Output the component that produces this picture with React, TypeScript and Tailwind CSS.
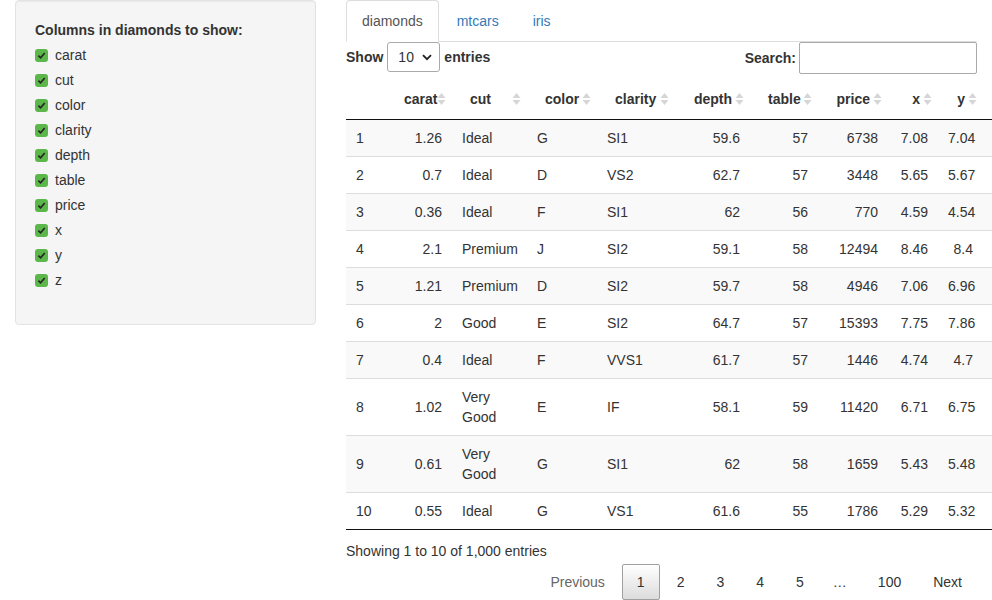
import type { ReactNode } from "react";

type Col = { name: string; width: string; right: boolean; sortable: boolean };

// the z column runs off the right edge of the window, so it is drawn empty
const cols: Col[] = [
  { name: "", width: "w-[40px]", right: false, sortable: false },
  { name: "carat", width: "w-[66px]", right: true, sortable: true },
  { name: "cut", width: "w-[75px]", right: false, sortable: true },
  { name: "color", width: "w-[70px]", right: false, sortable: true },
  { name: "clarity", width: "w-[78px]", right: false, sortable: true },
  { name: "depth", width: "w-[75px]", right: true, sortable: true },
  { name: "table", width: "w-[68px]", right: true, sortable: true },
  { name: "price", width: "w-[70px]", right: true, sortable: true },
  { name: "x", width: "w-[50px]", right: true, sortable: true },
  { name: "y", width: "w-[45px]", right: true, sortable: true },
  { name: "", width: "w-[60px]", right: true, sortable: false },
];

const rows: string[][] = [
  ["1", "1.26", "Ideal", "G", "SI1", "59.6", "57", "6738", "7.08", "7.04", ""],
  ["2", "0.7", "Ideal", "D", "VS2", "62.7", "57", "3448", "5.65", "5.67", ""],
  ["3", "0.36", "Ideal", "F", "SI1", "62", "56", "770", "4.59", "4.54", ""],
  ["4", "2.1", "Premium", "J", "SI2", "59.1", "58", "12494", "8.46", "8.4", ""],
  ["5", "1.21", "Premium", "D", "SI2", "59.7", "58", "4946", "7.06", "6.96", ""],
  ["6", "2", "Good", "E", "SI2", "64.7", "57", "15393", "7.75", "7.86", ""],
  ["7", "0.4", "Ideal", "F", "VVS1", "61.7", "57", "1446", "4.74", "4.7", ""],
  ["8", "1.02", "Very Good", "E", "IF", "58.1", "59", "11420", "6.71", "6.75", ""],
  ["9", "0.61", "Very Good", "G", "SI1", "62", "58", "1659", "5.43", "5.48", ""],
  ["10", "0.55", "Ideal", "G", "VS1", "61.6", "55", "1786", "5.29", "5.32", ""],
];

const checks = ["carat", "cut", "color", "clarity", "depth", "table", "price", "x", "y", "z"];

function SortIcon() {
  return (
    <svg width="9" height="13" viewBox="0 0 9 13" className="absolute right-[6px] top-1/2 -translate-y-1/2">
      <path d="M4.5 0.5L8.5 5.5H0.5Z" fill="#d6d6d6" />
      <path d="M4.5 12.5L8.5 7.5H0.5Z" fill="#d6d6d6" />
    </svg>
  );
}

function CheckItem({ label }: { label: string }) {
  return (
    <label className="flex items-center h-[20px]">
      <span className="w-[13px] h-[13px] rounded-[3px] bg-[#5cb74a] flex items-center justify-center mr-[7px]">
        <svg width="9" height="9" viewBox="0 0 10 10">
          <path d="M1.5 5.2L4 7.6L8.6 2.2" stroke="#262626" strokeWidth="1.9" fill="none" />
        </svg>
      </span>
      <span>{label}</span>
    </label>
  );
}

function PageButton({ children, current, muted }: { children: ReactNode; current?: boolean; muted?: boolean }) {
  return (
    <span
      className={
        current
          ? "ml-[2px] h-[36px] min-w-[21px] px-[14px] py-[7px] border border-[#a0a0a0] rounded-[2px] bg-linear-to-b from-white to-[#dcdcdc] text-[#333]"
          : muted
            ? "ml-[2px] h-[36px] min-w-[21px] px-[14px] py-[7px] border border-transparent text-[#666]"
            : "ml-[2px] h-[36px] min-w-[21px] px-[14px] py-[7px] border border-transparent text-[#333]"
      }
    >
      {children}
    </span>
  );
}

export default function App() {
  return (
    <div className="w-[992px] h-[600px] overflow-hidden bg-white text-[#333] text-[14px] leading-[20px] font-['Liberation_Sans',Arial,sans-serif]">
      <div className="flex">
        {/* sidebar */}
        <div className="w-[331px] shrink-0 px-[15px]">
          <div className="bg-[#f5f5f5] border border-[#e3e3e3] rounded-[4px] p-[19px] pb-[34px] shadow-[inset_0_1px_1px_rgba(0,0,0,0.05)]">
            <div className="font-bold mb-[5px]">Columns in diamonds to show:</div>
            <div className="flex flex-col gap-[5px]">
              {checks.map((c) => (
                <CheckItem key={c} label={c} />
              ))}
            </div>
          </div>
        </div>

        {/* main */}
        <div className="w-[661px] shrink-0 px-[15px]">
          <ul className="flex border-b border-[#ddd]">
            <li className="-mb-px mr-[2px]">
              <span className="block px-[15px] py-[10px] border border-[#ddd] border-b-transparent rounded-t-[4px] bg-white text-[#555]">
                diamonds
              </span>
            </li>
            <li className="-mb-px mr-[2px]">
              <span className="block px-[15px] py-[10px] border border-transparent text-[#337ab7]">mtcars</span>
            </li>
            <li className="-mb-px mr-[2px]">
              <span className="block px-[15px] py-[10px] border border-transparent text-[#337ab7]">iris</span>
            </li>
          </ul>

          <div className="flex justify-between items-start">
            <div className="flex items-center h-[30px] font-bold">
              <span>Show</span>
              <span className="mx-[4px] w-[53px] h-[30px] border border-[#aaa] rounded-[3px] bg-white flex items-center justify-between pl-[10px] pr-[7px] font-normal">
                <span>10</span>
                <svg width="10" height="7" viewBox="0 0 10 7">
                  <path d="M1 1.2L5 5.2L9 1.2" stroke="#222" strokeWidth="1.8" fill="none" />
                </svg>
              </span>
              <span>entries</span>
            </div>
            <div className="flex items-center h-[32px] font-bold">
              <span>Search:</span>
              <span className="ml-[3px] w-[178px] h-[32px] border border-[#aaa] rounded-[2px] bg-white" />
            </div>
          </div>

          <table className="mt-[5px] w-[697px] max-w-none table-fixed border-collapse">
            <colgroup>
              {cols.map((c, i) => (
                <col key={i} className={c.width} />
              ))}
            </colgroup>
            <thead>
              <tr>
                {cols.map((c, i) => (
                  <th
                    key={i}
                    className={
                      c.right
                        ? "relative px-[18px] py-[10px] text-right font-bold border-b border-[#111] whitespace-nowrap"
                        : "relative px-[18px] py-[10px] text-left font-bold border-b border-[#111] whitespace-nowrap"
                    }
                  >
                    {c.name}
                    {c.sortable && <SortIcon />}
                  </th>
                ))}
              </tr>
            </thead>
            <tbody>
              {rows.map((r, ri) => (
                <tr
                  key={ri}
                  className={
                    ri === 0
                      ? "bg-[#f9f9f9]"
                      : ri % 2 === 0
                        ? "bg-[#f9f9f9] border-t border-[#ddd]"
                        : "bg-white border-t border-[#ddd]"
                  }
                >
                  {r.map((v, ci) => (
                    <td
                      key={ci}
                      className={
                        cols[ci].right
                          ? "px-[10px] py-[8px] align-middle text-right whitespace-nowrap"
                          : "px-[10px] py-[8px] align-middle text-left"
                      }
                    >
                      {v}
                    </td>
                  ))}
                </tr>
              ))}
              <tr className="border-t border-[#111]" />
            </tbody>
          </table>

          <div className="pt-[11px]">Showing 1 to 10 of 1,000 entries</div>

          <div className="flex justify-end items-center pt-[3px]">
            <PageButton muted>Previous</PageButton>
            <PageButton current>1</PageButton>
            <PageButton>2</PageButton>
            <PageButton>3</PageButton>
            <PageButton>4</PageButton>
            <PageButton>5</PageButton>
            <span className="px-[14px]">…</span>
            <PageButton>100</PageButton>
            <PageButton>Next</PageButton>
          </div>
        </div>
      </div>
    </div>
  );
}
